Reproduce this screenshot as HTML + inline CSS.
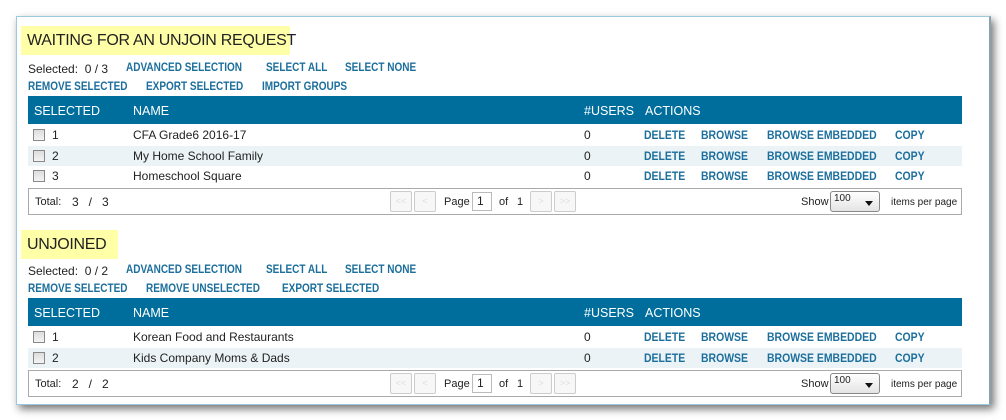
<!DOCTYPE html>
<html><head><meta charset="utf-8"><style>
*{margin:0;padding:0;box-sizing:border-box}
i{font-style:normal}
body{width:1006px;height:420px;background:#fff;font-family:"Liberation Sans",sans-serif;position:relative;overflow:hidden;color:#222}
.win{position:absolute;left:16px;top:16px;width:975px;height:389px;border:1px solid #9cc9de;border-right:2px solid #8aa0aa;background:#fff;box-shadow:3px 4px 8px rgba(0,0,0,.55)}
.a{position:absolute;white-space:nowrap}
.t{background:#ffffa8;font-size:16px;color:#222;padding-left:6px;line-height:29px;height:29px;letter-spacing:-0.3px}
.s{font-size:12px}
.l{font-size:11.5px;font-weight:bold;color:#1c6f9c;transform:scaleX(0.87);transform-origin:left center;display:inline-block}
.h{background:#006e9c;height:28px;left:28px;width:934px}
.h span{position:absolute;top:8px;color:#fff;font-size:12.5px}
.r{left:28px;width:934px;height:20px}
.r.alt{background:#ebf3f6}
.r span{position:absolute;top:3px;font-size:12px}
.r .l{top:3px}
.cb{position:absolute;left:5px;top:4px;width:12px;height:12px;border:1px solid #888;background:linear-gradient(#ddd,#f4f4f4)}
.p{left:28px;width:934px;height:27px;border:1px solid #aaa;background:#fff}
.p span{position:absolute;font-size:11px;top:7px}
.b{position:absolute;top:2px;width:22px;height:21px;border:1px solid #ccc;border-radius:2px;background:#f7f7f7;color:#ddd;font-size:9px;text-align:center;line-height:19px}
.in{position:absolute;left:443px;top:3px;width:20px;height:19px;border:1px solid #bbb;font-size:12px;padding-left:4px;line-height:17px}
.sel{position:absolute;left:801px;top:2px;width:50px;height:21px;border:1px solid #888;border-radius:3px;background:linear-gradient(#fff,#e4e4e4);font-size:10px;padding-left:3px;line-height:13px}
.sel:after{content:"";position:absolute;right:6px;top:9px;border:4px solid transparent;border-top:5px solid #111}
.ipp{font-size:10px!important;top:8px!important}
</style></head><body>
<div class="win"></div>

<div class="a t" style="left:21px;top:26px;width:269px">WAITING FOR AN UNJOIN REQUEST</div>
<div class="a s" style="left:28px;top:62px">Selected:&nbsp; 0 / 3</div>
<div class="a l" style="left:126px;top:62px">ADVANCED SELECTION</div>
<div class="a l" style="left:266px;top:62px">SELECT ALL</div>
<div class="a l" style="left:345px;top:62px">SELECT NONE</div>
<div class="a l" style="left:28px;top:81px">REMOVE SELECTED</div>
<div class="a l" style="left:146px;top:81px">EXPORT SELECTED</div>
<div class="a l" style="left:262px;top:81px">IMPORT GROUPS</div>
<div class="a h" style="top:96px"><span style="left:6px">SELECTED</span><span style="left:105px">NAME</span><span style="left:556px">#USERS</span><span style="left:617px">ACTIONS</span></div>
<div class="a r" style="top:125px"><i class="cb"></i><span style="left:24px">1</span><span style="left:105px">CFA Grade6 2016-17</span><span style="left:556px">0</span><span class="l" style="left:616px">DELETE</span><span class="l" style="left:673px">BROWSE</span><span class="l" style="left:739px">BROWSE EMBEDDED</span><span class="l" style="left:867px">COPY</span></div>
<div class="a r alt" style="top:146px"><i class="cb"></i><span style="left:24px">2</span><span style="left:105px">My Home School Family</span><span style="left:556px">0</span><span class="l" style="left:616px">DELETE</span><span class="l" style="left:673px">BROWSE</span><span class="l" style="left:739px">BROWSE EMBEDDED</span><span class="l" style="left:867px">COPY</span></div>
<div class="a r" style="top:166px"><i class="cb"></i><span style="left:24px">3</span><span style="left:105px">Homeschool Square</span><span style="left:556px">0</span><span class="l" style="left:616px">DELETE</span><span class="l" style="left:673px">BROWSE</span><span class="l" style="left:739px">BROWSE EMBEDDED</span><span class="l" style="left:867px">COPY</span></div>
<div class="a p" style="top:188px"><span style="left:6px">Total:</span><span style="left:43px;font-size:12px;top:6px">3 &nbsp; / &nbsp; 3</span><i class="b" style="left:361px">&lt;&lt;</i><i class="b" style="left:385px">&lt;</i><span style="left:415px">Page</span><i class="in">1</i><span style="left:470px">of</span><span style="left:488px">1</span><i class="b" style="left:501px">&gt;</i><i class="b" style="left:525px">&gt;&gt;</i><span style="left:772px">Show</span><i class="sel">100</i><span class="ipp" style="left:862px">items per page</span></div>

<div class="a t" style="left:21px;top:230px;width:97px">UNJOINED</div>
<div class="a s" style="left:28px;top:264px">Selected:&nbsp; 0 / 2</div>
<div class="a l" style="left:126px;top:264px">ADVANCED SELECTION</div>
<div class="a l" style="left:266px;top:264px">SELECT ALL</div>
<div class="a l" style="left:345px;top:264px">SELECT NONE</div>
<div class="a l" style="left:28px;top:283px">REMOVE SELECTED</div>
<div class="a l" style="left:146px;top:283px">REMOVE UNSELECTED</div>
<div class="a l" style="left:282px;top:283px">EXPORT SELECTED</div>
<div class="a h" style="top:298px"><span style="left:6px">SELECTED</span><span style="left:105px">NAME</span><span style="left:556px">#USERS</span><span style="left:617px">ACTIONS</span></div>
<div class="a r" style="top:327px"><i class="cb"></i><span style="left:24px">1</span><span style="left:105px">Korean Food and Restaurants</span><span style="left:556px">0</span><span class="l" style="left:616px">DELETE</span><span class="l" style="left:673px">BROWSE</span><span class="l" style="left:739px">BROWSE EMBEDDED</span><span class="l" style="left:867px">COPY</span></div>
<div class="a r alt" style="top:348px"><i class="cb"></i><span style="left:24px">2</span><span style="left:105px">Kids Company Moms &amp; Dads</span><span style="left:556px">0</span><span class="l" style="left:616px">DELETE</span><span class="l" style="left:673px">BROWSE</span><span class="l" style="left:739px">BROWSE EMBEDDED</span><span class="l" style="left:867px">COPY</span></div>
<div class="a p" style="top:370px"><span style="left:6px">Total:</span><span style="left:43px;font-size:12px;top:6px">2 &nbsp; / &nbsp; 2</span><i class="b" style="left:361px">&lt;&lt;</i><i class="b" style="left:385px">&lt;</i><span style="left:415px">Page</span><i class="in">1</i><span style="left:470px">of</span><span style="left:488px">1</span><i class="b" style="left:501px">&gt;</i><i class="b" style="left:525px">&gt;&gt;</i><span style="left:772px">Show</span><i class="sel">100</i><span class="ipp" style="left:862px">items per page</span></div>
</body></html>
